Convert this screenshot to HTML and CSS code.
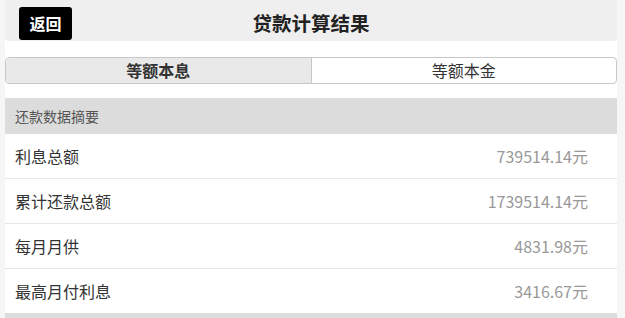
FILE: index.html
```html
<!DOCTYPE html>
<html lang="zh-CN">
<head>
  <meta charset="UTF-8" />
  <meta name="viewport" content="width=device-width, initial-scale=1.0" />
  <title>贷款计算结果</title>
  <link rel="stylesheet" href="styles.css">
</head>
<body>
  <div class="page">
    <header class="topbar">
      <a class="back-btn">返回</a>
      <h1>贷款计算结果</h1>
    </header>
    <div class="tabs-wrap">
      <div class="tabs">
        <div class="tab active">等额本息</div>
        <div class="tab">等额本金</div>
      </div>
    </div>
    <div class="section-title">还款数据摘要</div>
    <ul class="rows">
      <li><span class="label">利息总额</span><span class="value">739514.14元</span></li>
      <li><span class="label">累计还款总额</span><span class="value">1739514.14元</span></li>
      <li><span class="label">每月月供</span><span class="value">4831.98元</span></li>
      <li><span class="label">最高月付利息</span><span class="value">3416.67元</span></li>
    </ul>
    <div class="section-title next"></div>
  </div>
</body>
</html>
```

FILE: styles.css
```css
body {
  margin: 0;
  padding: 0;
  background: #f6f6f6;
  font-family: "Noto Sans CJK SC", "Noto Sans", sans-serif;
  color: #333;
}
.page {
  margin: 0 8px 0 5px;
  background: #fff;
  min-height: 318px;
}
.topbar {
  position: relative;
  height: 41px;
  background: #efefef;
  border-radius: 0 0 4px 4px;
  display: flex;
  align-items: center;
  justify-content: center;
}
.topbar h1 {
  margin: 4px 0 0;
  font-size: 19.5px;
  font-weight: bold;
  color: #222;
}
.back-btn {
  position: absolute;
  left: 14px;
  top: 7px;
  width: 53px;
  height: 33px;
  line-height: 33px;
  text-align: center;
  background: #000;
  color: #fff;
  font-size: 16px;
  font-weight: bold;
  border-radius: 3px;
}
.tabs-wrap {
  padding: 16px 0 14px;
}
.tabs {
  display: flex;
  height: 25px;
  border: 1px solid #c8c8c8;
  border-radius: 4px;
  overflow: hidden;
}
.tab {
  flex: 1;
  text-align: center;
  font-size: 16px;
  line-height: 25px;
  color: #333;
}
.tab.active {
  background: #e9e9e9;
  font-weight: bold;
  border-right: 1px solid #c8c8c8;
}
.section-title {
  background: #dcdcdc;
  height: 36px;
  line-height: 36px;
  padding-left: 10px;
  font-size: 14px;
  color: #555;
}
.section-title.next {
  height: 6px;
}
.rows {
  list-style: none;
  margin: 0;
  padding: 0;
}
.rows li {
  display: flex;
  justify-content: space-between;
  align-items: center;
  height: 44px;
  padding: 0 29px 0 10px;
  border-bottom: 1px solid #e6e6e6;
}
.rows li:last-child {
  border-bottom: none;
}
.label {
  font-size: 16px;
  color: #333;
}
.value {
  font-size: 16px;
  color: #999;
}
```
